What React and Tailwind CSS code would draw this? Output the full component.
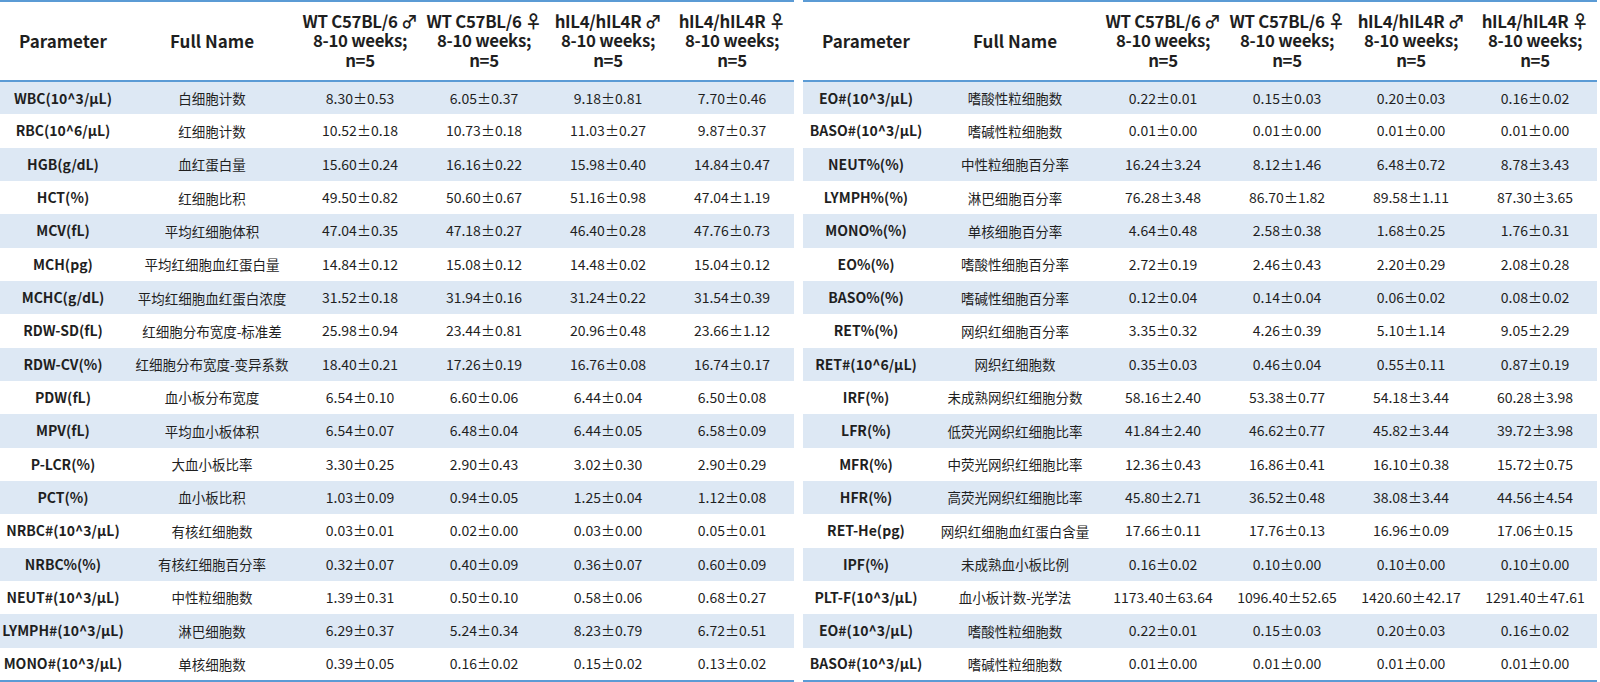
import React from "react";

const left = [
  ["WBC(10^3/μL)", "白细胞计数", "8.30±0.53", "6.05±0.37", "9.18±0.81", "7.70±0.46"],
  ["RBC(10^6/μL)", "红细胞计数", "10.52±0.18", "10.73±0.18", "11.03±0.27", "9.87±0.37"],
  ["HGB(g/dL)", "血红蛋白量", "15.60±0.24", "16.16±0.22", "15.98±0.40", "14.84±0.47"],
  ["HCT(%)", "红细胞比积", "49.50±0.82", "50.60±0.67", "51.16±0.98", "47.04±1.19"],
  ["MCV(fL)", "平均红细胞体积", "47.04±0.35", "47.18±0.27", "46.40±0.28", "47.76±0.73"],
  ["MCH(pg)", "平均红细胞血红蛋白量", "14.84±0.12", "15.08±0.12", "14.48±0.02", "15.04±0.12"],
  ["MCHC(g/dL)", "平均红细胞血红蛋白浓度", "31.52±0.18", "31.94±0.16", "31.24±0.22", "31.54±0.39"],
  ["RDW-SD(fL)", "红细胞分布宽度-标准差", "25.98±0.94", "23.44±0.81", "20.96±0.48", "23.66±1.12"],
  ["RDW-CV(%)", "红细胞分布宽度-变异系数", "18.40±0.21", "17.26±0.19", "16.76±0.08", "16.74±0.17"],
  ["PDW(fL)", "血小板分布宽度", "6.54±0.10", "6.60±0.06", "6.44±0.04", "6.50±0.08"],
  ["MPV(fL)", "平均血小板体积", "6.54±0.07", "6.48±0.04", "6.44±0.05", "6.58±0.09"],
  ["P-LCR(%)", "大血小板比率", "3.30±0.25", "2.90±0.43", "3.02±0.30", "2.90±0.29"],
  ["PCT(%)", "血小板比积", "1.03±0.09", "0.94±0.05", "1.25±0.04", "1.12±0.08"],
  ["NRBC#(10^3/μL)", "有核红细胞数", "0.03±0.01", "0.02±0.00", "0.03±0.00", "0.05±0.01"],
  ["NRBC%(%)", "有核红细胞百分率", "0.32±0.07", "0.40±0.09", "0.36±0.07", "0.60±0.09"],
  ["NEUT#(10^3/μL)", "中性粒细胞数", "1.39±0.31", "0.50±0.10", "0.58±0.06", "0.68±0.27"],
  ["LYMPH#(10^3/μL)", "淋巴细胞数", "6.29±0.37", "5.24±0.34", "8.23±0.79", "6.72±0.51"],
  ["MONO#(10^3/μL)", "单核细胞数", "0.39±0.05", "0.16±0.02", "0.15±0.02", "0.13±0.02"],
];

const right = [
  ["EO#(10^3/μL)", "嗜酸性粒细胞数", "0.22±0.01", "0.15±0.03", "0.20±0.03", "0.16±0.02"],
  ["BASO#(10^3/μL)", "嗜碱性粒细胞数", "0.01±0.00", "0.01±0.00", "0.01±0.00", "0.01±0.00"],
  ["NEUT%(%)", "中性粒细胞百分率", "16.24±3.24", "8.12±1.46", "6.48±0.72", "8.78±3.43"],
  ["LYMPH%(%)", "淋巴细胞百分率", "76.28±3.48", "86.70±1.82", "89.58±1.11", "87.30±3.65"],
  ["MONO%(%)", "单核细胞百分率", "4.64±0.48", "2.58±0.38", "1.68±0.25", "1.76±0.31"],
  ["EO%(%)", "嗜酸性细胞百分率", "2.72±0.19", "2.46±0.43", "2.20±0.29", "2.08±0.28"],
  ["BASO%(%)", "嗜碱性细胞百分率", "0.12±0.04", "0.14±0.04", "0.06±0.02", "0.08±0.02"],
  ["RET%(%)", "网织红细胞百分率", "3.35±0.32", "4.26±0.39", "5.10±1.14", "9.05±2.29"],
  ["RET#(10^6/μL)", "网织红细胞数", "0.35±0.03", "0.46±0.04", "0.55±0.11", "0.87±0.19"],
  ["IRF(%)", "未成熟网织红细胞分数", "58.16±2.40", "53.38±0.77", "54.18±3.44", "60.28±3.98"],
  ["LFR(%)", "低荧光网织红细胞比率", "41.84±2.40", "46.62±0.77", "45.82±3.44", "39.72±3.98"],
  ["MFR(%)", "中荧光网织红细胞比率", "12.36±0.43", "16.86±0.41", "16.10±0.38", "15.72±0.75"],
  ["HFR(%)", "高荧光网织红细胞比率", "45.80±2.71", "36.52±0.48", "38.08±3.44", "44.56±4.54"],
  ["RET-He(pg)", "网织红细胞血红蛋白含量", "17.66±0.11", "17.76±0.13", "16.96±0.09", "17.06±0.15"],
  ["IPF(%)", "未成熟血小板比例", "0.16±0.02", "0.10±0.00", "0.10±0.00", "0.10±0.00"],
  ["PLT-F(10^3/μL)", "血小板计数-光学法", "1173.40±63.64", "1096.40±52.65", "1420.60±42.17", "1291.40±47.61"],
  ["EO#(10^3/μL)", "嗜酸性粒细胞数", "0.22±0.01", "0.15±0.03", "0.20±0.03", "0.16±0.02"],
  ["BASO#(10^3/μL)", "嗜碱性粒细胞数", "0.01±0.00", "0.01±0.00", "0.01±0.00", "0.01±0.00"],
];

const groups = ["WT C57BL/6 ♂", "WT C57BL/6 ♀", "hIL4/hIL4R ♂", "hIL4/hIL4R ♀"];

const DataTable = ({ rows }) => {
  return (
    <table className="w-[794px] table-fixed border-collapse text-[#1f1f1f]">
      <colgroup>
        <col className="w-[126px]" />
        <col className="w-[172px]" />
        <col className="w-[124px]" />
        <col className="w-[124px]" />
        <col className="w-[124px]" />
        <col className="w-[124px]" />
      </colgroup>
      <thead>
        <tr className="h-[80px] border-t-2 border-b-2 border-[#5b9bd5]">
          <th className="text-[17px] font-bold leading-[19.5px]">Parameter</th>
          <th className="text-[17px] font-bold leading-[19.5px]">Full Name</th>
          {groups.map((g) => (
            <th
              key={g}
              className="whitespace-nowrap text-[16.8px] font-bold leading-[19.5px] tracking-[-0.3px]"
            >
              {g}
              <br />
              8-10 weeks;
              <br />
              n=5
            </th>
          ))}
        </tr>
      </thead>
      <tbody className="border-b-2 border-[#5b9bd5]">
        {rows.map((r, i) => (
          <tr key={i} className={i % 2 === 0 ? "h-[33.2px] bg-[#dde8f4]" : "h-[33.2px] bg-white"}>
            <td className="text-center text-[14px] font-bold whitespace-nowrap">{r[0]}</td>
            <td className="text-center text-[13.5px] whitespace-nowrap">{r[1]}</td>
            {r.slice(2).map((v, j) => (
              <td key={j} className="text-center text-[14px] whitespace-nowrap">{v}</td>
            ))}
          </tr>
        ))}
      </tbody>
    </table>
  );
};

const App = () => {
  return (
    <div
      className="w-[1600px] h-[682px] bg-white flex gap-[9px] overflow-hidden"
      style={{ fontFamily: '"Noto Sans CJK SC", "Noto Sans", sans-serif' }}
    >
      <DataTable rows={left} />
      <DataTable rows={right} />
    </div>
  );
};

export default App;
